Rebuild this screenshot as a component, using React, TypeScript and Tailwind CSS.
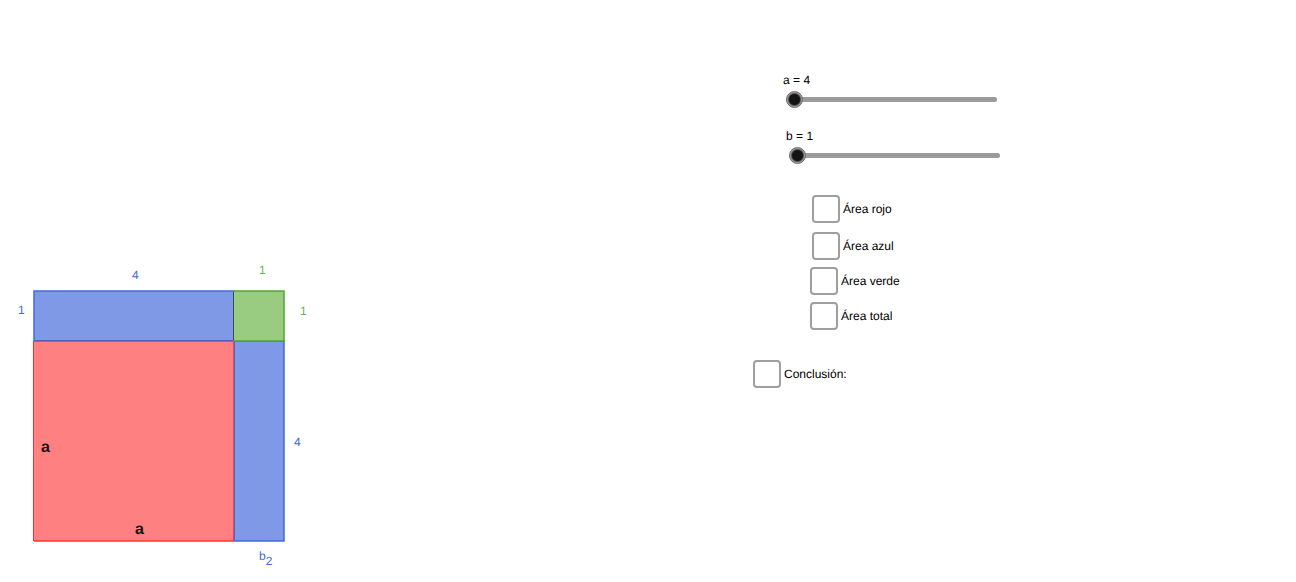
import React, { useState } from 'react';

interface SliderProps {
	name: string;
	min: number;
	value: number;
	onChange: (value: number) => void;
	className?: string;
}

interface CheckProps {
	label: string;
	className?: string;
}

const Slider = ({ name, min, value, onChange, className = '' }: SliderProps) => {
	return (
		<div className={`flex flex-col w-[214px] ${className}`}>
			<label htmlFor={`slider-${name}`} className="leading-4">
				{name} = {value}
			</label>
			<input
				id={`slider-${name}`}
				type="range"
				min={min}
				max={min + 6}
				value={value}
				onChange={(e) => onChange(Number(e.target.value))}
				className="ml-[3px] mt-[2px] block h-[18px] w-[211px] cursor-pointer appearance-none bg-transparent [&::-webkit-slider-runnable-track]:h-[5px] [&::-webkit-slider-runnable-track]:rounded-full [&::-webkit-slider-runnable-track]:bg-[#9b9b9b] [&::-webkit-slider-thumb]:-mt-[6px] [&::-webkit-slider-thumb]:size-[17px] [&::-webkit-slider-thumb]:appearance-none [&::-webkit-slider-thumb]:rounded-full [&::-webkit-slider-thumb]:border [&::-webkit-slider-thumb]:border-[#6f6f6f] [&::-webkit-slider-thumb]:bg-[radial-gradient(circle,#141414_0_5px,#999999_7px)]"
			/>
		</div>
	);
};

const Check = ({ label, className = '' }: CheckProps) => {
	return (
		<label className={`flex w-fit items-center gap-[3px] ${className}`}>
			<input
				type="checkbox"
				className="size-7 shrink-0 appearance-none rounded-[4px] border-2 border-[#9f9f9f] bg-white checked:bg-[#9b9b9b]"
			/>
			<span>{label}</span>
		</label>
	);
};

const Figure = ({ a, b }: { a: number; b: number }) => {
	const left = 34;
	const top = 39;
	const side = 250;
	const big = (side * a) / (a + b);
	const small = side - big;
	const right = left + side;
	const bottom = top + side;
	const x = left + big;
	const y = top + small;

	return (
		<svg width="320" height="330" viewBox="0 0 320 330" fontSize="12" role="img" aria-label="(a + b)²">
			<rect x={left} y={top} width={big} height={small} fill="#8099e6" stroke="#4169dc" strokeWidth="1.5" />
			<rect x={x} y={y} width={small} height={big} fill="#8099e6" stroke="#4169dc" strokeWidth="1.5" />
			<rect x={left} y={y} width={big} height={big} fill="#ff8080" />
			<path d={`M${left - 0.5} ${y}V${bottom}`} stroke="#f03038" />
			<path d={`M${left} ${bottom}H${x}`} stroke="#ff3333" strokeWidth="1.5" />
			<rect x={x} y={top} width={small} height={small} fill="#99cc80" />
			<path d={`M${x} ${top}H${right}V${y}H${x}`} fill="none" stroke="#4da62e" strokeWidth="1.5" />
			<path d={`M${x - 0.5} ${top + 1}V${y - 1}`} stroke="#3d4a5c" />
			<path d={`M${x - 0.5} ${y}V${bottom}`} stroke="#e8465a" />
			<path d={`M${x + 0.5} ${y + 1}V${bottom - 1}`} stroke="#5563c8" />
			<path d={`M${left + 1} ${y - 0.5}H${x - 1}`} stroke="#5a58c4" />
			<path d={`M${left} ${y + 0.5}H${x}`} stroke="#e84858" />

			<g fill="#4169dc">
				<text x={left + big / 2 - 2} y="27">{a}</text>
				<text x="18" y="62">{b}</text>
				<text x="294" y={y + big / 2 + 5}>{a}</text>
				<text x={x + small / 2} y={bottom + 19}>
					b<tspan dy="5">2</tspan>
				</text>
			</g>
			<g fill="#6bb34d">
				<text x={x + small / 2} y="22">{b}</text>
				<text x="300" y="63">{b}</text>
			</g>
			<g fill="#141414" fontSize="16" fontWeight="bold">
				<text x="41" y="200">a</text>
				<text x="135" y="282">a</text>
			</g>
		</svg>
	);
};

const App = () => {
	const [a, setA] = useState(4);
	const [b, setB] = useState(1);

	return (
		<main className="flex min-h-screen bg-white font-['Liberation_Sans',Arial,sans-serif] text-[12px] text-black [text-rendering:geometricPrecision]">
			<section className="flex flex-1 items-end">
				<Figure a={a} b={b} />
			</section>
			<section className="flex w-[543px] flex-col pt-[72px]">
				<Slider name="a" min={4} value={a} onChange={setA} className="ml-[30px]" />
				<Slider name="b" min={1} value={b} onChange={setB} className="ml-[33px] mt-[20px]" />
				<Check label="Área rojo" className="ml-[59px] mt-[31px]" />
				<Check label="Área azul" className="ml-[59px] mt-[9px]" />
				<Check label="Área verde" className="ml-[57px] mt-[7px]" />
				<Check label="Área total" className="ml-[57px] mt-[7px]" />
				<Check label="Conclusión:" className="mt-[30px]" />
			</section>
		</main>
	);
};

export default App;
